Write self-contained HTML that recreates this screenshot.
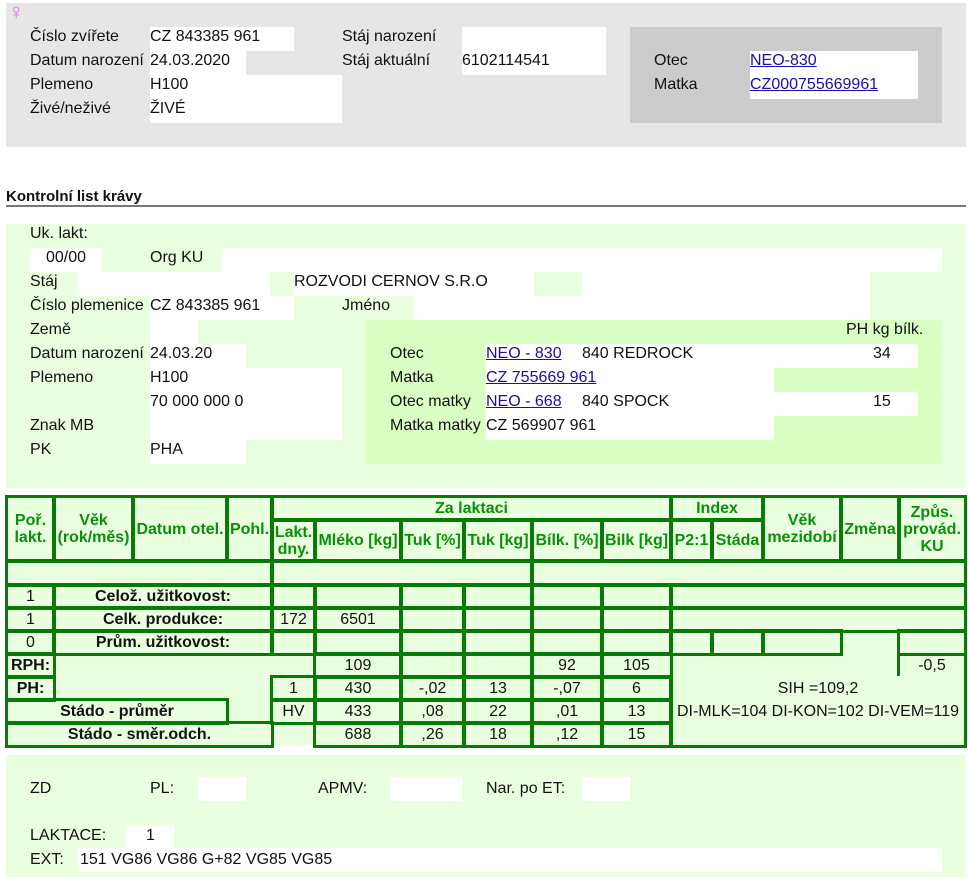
<!DOCTYPE html>
<html><head><meta charset="utf-8">
<style>
*{margin:0;padding:0;box-sizing:border-box}
body{width:968px;height:877px;background:#fff;position:relative;overflow:hidden;font-family:"Liberation Sans",Arial,sans-serif;font-size:16px;color:#111}
.a{position:absolute}
.w{position:absolute;background:#fff}
.t{position:absolute;white-space:nowrap;line-height:24px;height:24px;margin-top:2px}
.n{font-family:"Liberation Sans Narrow","Liberation Sans",sans-serif;}
a{color:#1a0dab;text-decoration:underline}
.c{position:absolute;border:3px solid #087a08;display:flex;align-items:center;justify-content:center;text-align:center;line-height:17px;white-space:nowrap}
.h{color:#0a8f0a;font-weight:bold;font-size:16px}
.b{font-weight:bold}
</style></head><body>

<!-- top gray -->
<div class="a" style="left:6px;top:3px;width:960px;height:144px;background:#e6e6e6"></div>
<div class="a" style="left:8px;top:0px;color:#e070e0;font-size:22px;line-height:24px">♀</div>
<div class="w" style="left:150px;top:27px;width:144px;height:24px"></div>
<div class="w" style="left:150px;top:51px;width:96px;height:24px"></div>
<div class="w" style="left:150px;top:75px;width:192px;height:48px"></div>
<div class="w" style="left:462px;top:27px;width:144px;height:48px"></div>
<div class="t" style="left:30px;top:23px">Číslo zvířete</div>
<div class="t" style="left:150px;top:23px">CZ 843385 961</div>
<div class="t" style="left:30px;top:47px">Datum narození</div>
<div class="t" style="left:150px;top:47px">24.03.2020</div>
<div class="t" style="left:30px;top:71px">Plemeno</div>
<div class="t" style="left:150px;top:71px">H100</div>
<div class="t" style="left:30px;top:95px">Živé/neživé</div>
<div class="t" style="left:150px;top:95px">ŽIVÉ</div>
<div class="t" style="left:342px;top:23px">Stáj narození</div>
<div class="t" style="left:342px;top:47px">Stáj aktuální</div>
<div class="t" style="left:462px;top:47px">6102114541</div>
<div class="a" style="left:630px;top:27px;width:312px;height:96px;background:#cccccc"></div>
<div class="w" style="left:750px;top:51px;width:168px;height:48px"></div>
<div class="t" style="left:654px;top:47px">Otec</div>
<div class="t" style="left:750px;top:47px"><a>NEO-830</a></div>
<div class="t" style="left:654px;top:71px">Matka</div>
<div class="t" style="left:750px;top:71px"><a>CZ000755669961</a></div>

<div class="t b" style="left:6px;top:183px;font-size:15px">Kontrolní list krávy</div>
<div class="a" style="left:6px;top:205px;width:960px;height:2px;background:#777"></div>

<!-- middle green -->
<div class="n" style="position:absolute;left:0;top:0;width:968px;height:877px">
<div class="a" style="left:6px;top:224px;width:960px;height:264px;background:#eaffdf"></div>
<div class="w" style="left:30px;top:248px;width:71px;height:24px"></div>
<div class="w" style="left:222px;top:248px;width:720px;height:24px"></div>
<div class="w" style="left:78px;top:272px;width:192px;height:24px"></div>
<div class="w" style="left:294px;top:272px;width:240px;height:24px"></div>
<div class="w" style="left:582px;top:272px;width:288px;height:24px"></div>
<div class="w" style="left:150px;top:296px;width:144px;height:24px"></div>
<div class="w" style="left:414px;top:296px;width:456px;height:24px"></div>
<div class="w" style="left:150px;top:320px;width:48px;height:24px"></div>
<div class="w" style="left:150px;top:344px;width:96px;height:24px"></div>
<div class="w" style="left:150px;top:368px;width:192px;height:72px"></div>
<div class="w" style="left:150px;top:440px;width:96px;height:24px"></div>
<div class="a" style="left:366px;top:320px;width:576px;height:144px;background:#d9ffc2"></div>
<div class="w" style="left:486px;top:344px;width:432px;height:24px"></div>
<div class="w" style="left:486px;top:368px;width:288px;height:24px"></div>
<div class="w" style="left:486px;top:392px;width:432px;height:24px"></div>
<div class="w" style="left:486px;top:416px;width:288px;height:24px"></div>

<div class="t" style="left:30px;top:220px">Uk. lakt:</div>
<div class="t" style="left:46px;top:244px">00/00</div>
<div class="t" style="left:150px;top:244px">Org KU</div>
<div class="t" style="left:30px;top:268px">Stáj</div>
<div class="t" style="left:294px;top:268px">ROZVODI CERNOV S.R.O</div>
<div class="t" style="left:30px;top:292px">Číslo plemenice</div>
<div class="t" style="left:150px;top:292px">CZ 843385 961</div>
<div class="t" style="left:342px;top:292px">Jméno</div>
<div class="t" style="left:30px;top:316px">Země</div>
<div class="t" style="left:846px;top:316px">PH kg bílk.</div>
<div class="t" style="left:30px;top:340px">Datum narození</div>
<div class="t" style="left:150px;top:340px">24.03.20</div>
<div class="t" style="left:390px;top:340px">Otec</div>
<div class="t" style="left:486px;top:340px"><a>NEO - 830</a></div>
<div class="t" style="left:582px;top:340px">840 REDROCK</div>
<div class="t" style="left:873px;top:340px">34</div>
<div class="t" style="left:30px;top:364px">Plemeno</div>
<div class="t" style="left:150px;top:364px">H100</div>
<div class="t" style="left:390px;top:364px">Matka</div>
<div class="t" style="left:486px;top:364px"><a>CZ 755669 961</a></div>
<div class="t" style="left:150px;top:388px">70 000 000 0</div>
<div class="t" style="left:390px;top:388px">Otec matky</div>
<div class="t" style="left:486px;top:388px"><a>NEO - 668</a></div>
<div class="t" style="left:582px;top:388px">840 SPOCK</div>
<div class="t" style="left:873px;top:388px">15</div>
<div class="t" style="left:30px;top:412px">Znak MB</div>
<div class="t" style="left:390px;top:412px">Matka matky</div>
<div class="t" style="left:486px;top:412px">CZ 569907 961</div>
<div class="t" style="left:30px;top:436px">PK</div>
<div class="t" style="left:150px;top:436px">PHA</div>
</div>

<!-- table -->
<div class="a" style="left:6px;top:496px;width:960px;height:249px;background:#eaffdf"></div>
<div class="c h" style="left:5px;top:495px;width:51px;height:68px">Poř.<br>lakt.</div>
<div class="c h" style="left:52px;top:495px;width:83px;height:68px">Věk<br>(rok/měs)</div>
<div class="c h" style="left:131px;top:495px;width:98px;height:68px">Datum otel.</div>
<div class="c h" style="left:225px;top:495px;width:49px;height:68px">Pohl.</div>
<div class="c h" style="left:270px;top:495px;width:403px;height:27px">Za laktaci</div>
<div class="c h" style="left:669px;top:495px;width:96px;height:27px">Index</div>
<div class="c h" style="left:761px;top:495px;width:82px;height:68px">Věk<br>mezidobí</div>
<div class="c h" style="left:839px;top:495px;width:62px;height:68px">Změna</div>
<div class="c h" style="left:897px;top:495px;width:70px;height:68px">Způs.<br>provád.<br>KU</div>
<div class="c h" style="left:270px;top:518px;width:47px;height:45px">Lakt.<br>dny.</div>
<div class="c h" style="left:313px;top:518px;width:90px;height:45px">Mléko [kg]</div>
<div class="c h" style="left:399px;top:518px;width:67px;height:45px">Tuk [%]</div>
<div class="c h" style="left:462px;top:518px;width:72px;height:45px">Tuk [kg]</div>
<div class="c h" style="left:530px;top:518px;width:74px;height:45px">Bílk. [%]</div>
<div class="c h" style="left:600px;top:518px;width:73px;height:45px">Bilk [kg]</div>
<div class="c h" style="left:669px;top:518px;width:45px;height:45px">P2:1</div>
<div class="c h" style="left:710px;top:518px;width:55px;height:45px">Stáda</div>
<div class="c" style="left:5px;top:559px;width:269px;height:28px"></div>
<div class="c" style="left:270px;top:559px;width:264px;height:28px"></div>
<div class="c" style="left:530px;top:559px;width:437px;height:28px"></div>
<div class="c" style="left:5px;top:583px;width:51px;height:27px">1</div>
<div class="c b" style="left:52px;top:583px;width:222px;height:27px">Celož. užitkovost:</div>
<div class="c" style="left:270px;top:583px;width:47px;height:27px"></div>
<div class="c" style="left:313px;top:583px;width:90px;height:27px"></div>
<div class="c" style="left:399px;top:583px;width:67px;height:27px"></div>
<div class="c" style="left:462px;top:583px;width:72px;height:27px"></div>
<div class="c" style="left:530px;top:583px;width:74px;height:27px"></div>
<div class="c" style="left:600px;top:583px;width:73px;height:27px"></div>
<div class="c" style="left:669px;top:583px;width:298px;height:27px"></div>
<div class="c" style="left:5px;top:606px;width:51px;height:27px">1</div>
<div class="c b" style="left:52px;top:606px;width:222px;height:27px">Celk. produkce:</div>
<div class="c" style="left:270px;top:606px;width:47px;height:27px">172</div>
<div class="c" style="left:313px;top:606px;width:90px;height:27px">6501</div>
<div class="c" style="left:399px;top:606px;width:67px;height:27px"></div>
<div class="c" style="left:462px;top:606px;width:72px;height:27px"></div>
<div class="c" style="left:530px;top:606px;width:74px;height:27px"></div>
<div class="c" style="left:600px;top:606px;width:73px;height:27px"></div>
<div class="c" style="left:669px;top:606px;width:298px;height:27px"></div>
<div class="c" style="left:5px;top:629px;width:51px;height:27px">0</div>
<div class="c b" style="left:52px;top:629px;width:222px;height:27px">Prům. užitkovost:</div>
<div class="c" style="left:270px;top:629px;width:47px;height:27px"></div>
<div class="c" style="left:313px;top:629px;width:90px;height:27px"></div>
<div class="c" style="left:399px;top:629px;width:67px;height:27px"></div>
<div class="c" style="left:462px;top:629px;width:72px;height:27px"></div>
<div class="c" style="left:530px;top:629px;width:74px;height:27px"></div>
<div class="c" style="left:600px;top:629px;width:73px;height:27px"></div>
<div class="c" style="left:669px;top:629px;width:45px;height:27px"></div>
<div class="c" style="left:710px;top:629px;width:55px;height:27px"></div>
<div class="c" style="left:761px;top:629px;width:82px;height:27px"></div>
<div class="c" style="left:897px;top:629px;width:70px;height:27px"></div>
<div class="c b" style="left:5px;top:652px;width:51px;height:27px">RPH:</div>
<div class="c" style="left:313px;top:652px;width:90px;height:27px">109</div>
<div class="c" style="left:399px;top:652px;width:67px;height:27px"></div>
<div class="c" style="left:462px;top:652px;width:72px;height:27px"></div>
<div class="c" style="left:530px;top:652px;width:74px;height:27px">92</div>
<div class="c" style="left:600px;top:652px;width:73px;height:27px">105</div>
<div class="a" style="left:897px;top:652px;width:3px;height:24px;background:#087a08"></div>
<div class="a" style="left:964px;top:652px;width:3px;height:24px;background:#087a08"></div>
<div class="t" style="left:898px;top:652px;width:68px;text-align:center">-0,5</div>
<div class="c b" style="left:5px;top:675px;width:51px;height:27px">PH:</div>
<div class="c" style="left:270px;top:675px;width:47px;height:27px">1</div>
<div class="c" style="left:313px;top:675px;width:90px;height:27px">430</div>
<div class="c" style="left:399px;top:675px;width:67px;height:27px">-,02</div>
<div class="c" style="left:462px;top:675px;width:72px;height:27px">13</div>
<div class="c" style="left:530px;top:675px;width:74px;height:27px">-,07</div>
<div class="c" style="left:600px;top:675px;width:73px;height:27px">6</div>
<div class="a" style="left:669px;top:675px;width:298px;height:73px;border-left:3px solid #087a08;border-bottom:3px solid #087a08;border-right:3px solid #087a08"></div>
<div class="t" style="left:670px;top:675px;width:296px;text-align:center">SIH =109,2</div>
<div class="t" style="left:670px;top:698px;width:296px;text-align:center">DI-MLK=104 DI-KON=102 DI-VEM=119</div>
<div class="c b" style="left:5px;top:698px;width:224px;height:27px">Stádo - průměr</div>
<div class="c" style="left:270px;top:698px;width:47px;height:27px">HV</div>
<div class="c" style="left:313px;top:698px;width:90px;height:27px">433</div>
<div class="c" style="left:399px;top:698px;width:67px;height:27px">,08</div>
<div class="c" style="left:462px;top:698px;width:72px;height:27px">22</div>
<div class="c" style="left:530px;top:698px;width:74px;height:27px">,01</div>
<div class="c" style="left:600px;top:698px;width:73px;height:27px">13</div>
<div class="c b" style="left:5px;top:721px;width:269px;height:27px">Stádo - směr.odch.</div>
<div class="c" style="left:313px;top:721px;width:90px;height:27px">688</div>
<div class="c" style="left:399px;top:721px;width:67px;height:27px">,26</div>
<div class="c" style="left:462px;top:721px;width:72px;height:27px">18</div>
<div class="c" style="left:530px;top:721px;width:74px;height:27px">,12</div>
<div class="c" style="left:600px;top:721px;width:73px;height:27px">15</div>

<!-- bottom green -->
<div class="n" style="position:absolute;left:0;top:0;width:968px;height:877px">
<div class="a" style="left:6px;top:755px;width:960px;height:122px;background:#eaffdf"></div>
<div class="w" style="left:198px;top:777px;width:48px;height:24px"></div>
<div class="w" style="left:390px;top:777px;width:72px;height:24px"></div>
<div class="w" style="left:582px;top:777px;width:48px;height:24px"></div>
<div class="w" style="left:126px;top:825px;width:48px;height:23px"></div>
<div class="w" style="left:78px;top:848px;width:864px;height:24px"></div>
<div class="t" style="left:30px;top:775px">ZD</div>
<div class="t" style="left:150px;top:775px">PL:</div>
<div class="t" style="left:318px;top:775px">APMV:</div>
<div class="t" style="left:486px;top:775px">Nar. po ET:</div>
<div class="t" style="left:30px;top:822px">LAKTACE:</div>
<div class="t" style="left:146px;top:822px">1</div>
<div class="t" style="left:30px;top:846px">EXT:</div>
<div class="t" style="left:80px;top:846px">151 VG86 VG86 G+82 VG85 VG85</div>
</div>
</body></html>
